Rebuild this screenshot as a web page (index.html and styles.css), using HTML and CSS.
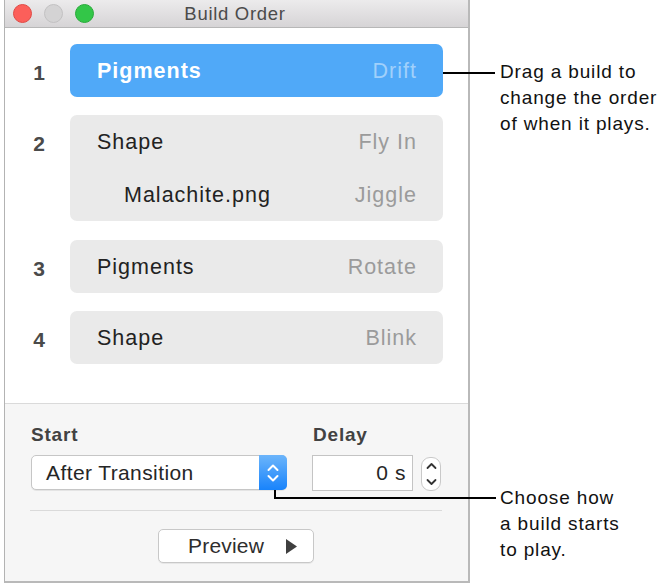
FILE: index.html
```html
<!DOCTYPE html>
<html>
<head>
<meta charset="utf-8">
<title>Build Order</title>
<link rel="stylesheet" href="styles.css">
</head>
<body>
<div class="page">
  <div class="window">
    <div class="titlebar">
      <div class="lights">
        <span class="light red"></span>
        <span class="light gray"></span>
        <span class="light green"></span>
      </div>
      <div class="title">Build Order</div>
      <div></div>
    </div>

    <div class="builds">
      <div class="build">
        <div class="num">1</div>
        <div class="card selected">
          <div class="line"><span class="name">Pigments</span><span class="effect">Drift</span></div>
        </div>
      </div>
      <div class="build double">
        <div class="num">2</div>
        <div class="card">
          <div class="line"><span class="name">Shape</span><span class="effect">Fly In</span></div>
          <div class="line sub"><span class="name">Malachite.png</span><span class="effect">Jiggle</span></div>
        </div>
      </div>
      <div class="build">
        <div class="num">3</div>
        <div class="card">
          <div class="line"><span class="name">Pigments</span><span class="effect">Rotate</span></div>
        </div>
      </div>
      <div class="build">
        <div class="num">4</div>
        <div class="card">
          <div class="line"><span class="name">Shape</span><span class="effect">Blink</span></div>
        </div>
      </div>
    </div>

    <div class="panel">
      <div class="fields">
        <div class="field start">
          <div class="label">Start</div>
          <div class="popup">
            <span class="popup-text">After Transition</span>
            <span class="popup-arrows">
              <svg width="12" height="22" viewBox="0 0 12 22"><path d="M1.5 8 L6 3.5 L10.5 8 M1.5 14 L6 18.5 L10.5 14" fill="none" stroke="#fff" stroke-width="2" stroke-linecap="round" stroke-linejoin="round"/></svg>
            </span>
          </div>
        </div>
        <div class="field delay">
          <div class="label delay-label">Delay</div>
          <div class="delay-row">
            <div class="numbox">0 s</div>
            <div class="stepper">
              <svg width="11" height="26" viewBox="0 0 11 26"><path d="M1.5 7 L5.5 3 L9.5 7 M1.5 19 L5.5 23 L9.5 19" fill="none" stroke="#333" stroke-width="1.8" stroke-linecap="round" stroke-linejoin="round"/></svg>
            </div>
          </div>
        </div>
      </div>
      <div class="sep"></div>
      <div class="actions">
        <button class="preview"><span>Preview</span>
          <svg class="play" width="11" height="15" viewBox="0 0 11 15"><polygon points="0,0 11,7.5 0,15" fill="#3f3f3f"/></svg>
        </button>
      </div>
    </div>
  </div>

  <div class="callouts">
    <p class="callout c1">Drag a build to<br>change the order<br>of when it plays.</p>
    <p class="callout c2">Choose how<br>a build starts<br>to play.</p>
  </div>
</div>
</body>
</html>
```

FILE: styles.css
```css
html, body {
  margin: 0;
  padding: 0;
  background: #fff;
}

body {
  font-family: "Liberation Sans", Arial, Helvetica, sans-serif;
  color: #222;
}

.page {
  display: flex;
  width: 666px;
  height: 584px;
  overflow: hidden;
}

/* ---------- window ---------- */
.window {
  margin-left: 4px;
  width: 466px;
  height: 583px;
  box-sizing: border-box;
  border-left: 1px solid #b3b3b3;
  border-right: 2px solid #b9b9b9;
  border-bottom: 2px solid #b9b9b9;
  display: flex;
  flex-direction: column;
  flex: none;
}

.titlebar {
  height: 27px;
  flex: none;
  border-bottom: 1px solid #b7b7b7;
  background: linear-gradient(#ecebec, #d6d4d6);
  display: grid;
  grid-template-columns: 1fr auto 1fr;
  align-items: center;
}

.lights {
  display: flex;
  gap: 12px;
  padding-left: 8px;
}

.light {
  width: 19px;
  height: 19px;
  box-sizing: border-box;
  border-radius: 50%;
  border: 1px solid;
}

.light.red {
  background: #fc5f5a;
  border-color: #e04a45;
}

.light.gray {
  background: #d4d3d4;
  border-color: #c2c1c2;
}

.light.green {
  background: #33c648;
  border-color: #29ab3a;
}

.title {
  font-size: 18.5px;
  letter-spacing: 0.7px;
  color: #4b4b4b;
  padding-right: 3px;
}

/* ---------- build list ---------- */
.builds {
  flex: 1;
  background: #fff;
  padding-top: 16px;
}

.build {
  display: grid;
  grid-template-columns: 65px 373px;
  margin-bottom: 18px;
}

.build.double {
  margin-bottom: 19px;
}

.num {
  height: 53px;
  line-height: 53px;
  padding: 2px 0 0 3px;
  box-sizing: border-box;
  text-align: center;
  font-size: 21px;
  font-weight: bold;
  color: #4a4a4a;
}

.card {
  background: #eaeaea;
  border-radius: 7px;
}

.card.selected {
  background: #50a9f8;
}

.line {
  height: 53px;
  box-sizing: border-box;
  display: flex;
  align-items: center;
  justify-content: space-between;
  padding: 2px 26px 0 27px;
  font-size: 21.5px;
  letter-spacing: 1px;
}

.line.sub .name {
  padding-left: 27px;
}

.name {
  color: #222;
}

.effect {
  color: #9b9b9b;
}

.selected .name {
  color: #fff;
  font-weight: bold;
}

.selected .effect {
  color: #a0d0fb;
}

/* ---------- bottom panel ---------- */
.panel {
  flex: none;
  height: 178px;
  box-sizing: border-box;
  border-top: 1px solid #dadada;
  background: #f6f6f6;
  padding: 20px 26px 0 25px;
}

.fields {
  display: flex;
  padding-left: 1px;
}

.field.start {
  width: 256px;
}

.field.delay {
  margin-left: 25px;
}

.label {
  font-size: 19px;
  line-height: 22px;
  font-weight: bold;
  letter-spacing: 0.8px;
  color: #424242;
  margin-bottom: 9px;
}

.delay-label {
  padding-left: 1px;
}

.popup {
  height: 35px;
  box-sizing: border-box;
  border: 1px solid #c6c6c6;
  border-radius: 5px;
  background: #fff;
  display: flex;
  align-items: center;
  box-shadow: 0 1px 0 rgba(0, 0, 0, 0.07);
}

.popup-text {
  flex: 1;
  padding-left: 14px;
  font-size: 21px;
  letter-spacing: 0.4px;
  color: #262626;
}

.popup-arrows {
  align-self: stretch;
  margin: -1px -1px -1px 0;
  width: 28px;
  border-radius: 0 5px 5px 0;
  background: linear-gradient(#6cb5fb, #1883fb);
  display: flex;
  align-items: center;
  justify-content: center;
}

.delay-row {
  display: flex;
  align-items: flex-start;
}

.numbox {
  width: 101px;
  height: 36px;
  box-sizing: border-box;
  border: 1px solid #c4c4c4;
  background: #fff;
  text-align: right;
  padding-right: 6px;
  font-size: 21px;
  line-height: 34px;
  letter-spacing: 0.6px;
  color: #262626;
}

.stepper {
  margin: 2px 0 0 8px;
  width: 20px;
  height: 34px;
  box-sizing: border-box;
  border: 1px solid #c9c9c9;
  border-radius: 9px;
  background: #fff;
  display: flex;
  align-items: center;
  justify-content: center;
}

.sep {
  margin-top: 19px;
  height: 1px;
  background: #dadada;
}

.actions {
  margin-top: 18px;
  display: flex;
  justify-content: center;
}

.preview {
  width: 156px;
  height: 34px;
  box-sizing: border-box;
  border: 1px solid #c8c8c8;
  border-radius: 5px;
  background: #fff;
  box-shadow: 0 1px 0 rgba(0, 0, 0, 0.06);
  display: flex;
  align-items: center;
  gap: 22px;
  padding: 0 18px 0 29px;
  font-family: "Liberation Sans", Arial, sans-serif;
  font-size: 21px;
  letter-spacing: 0.2px;
  color: #2e2e2e;
}

.play {
  flex: none;
  display: block;
}

/* ---------- callouts ---------- */
.callouts {
  margin-left: 30px;
  flex: none;
}

.callout {
  position: relative;
  margin: 0;
  font-size: 19px;
  line-height: 26px;
  letter-spacing: 0.85px;
  color: #111;
  white-space: nowrap;
}

.c1 {
  margin-top: 59px;
}

.c1::before {
  content: "";
  position: absolute;
  left: -57px;
  top: 13px;
  width: 52px;
  height: 2px;
  background: #000;
}

.c2 {
  margin-top: 348px;
}

.c2::before {
  content: "";
  position: absolute;
  left: -226px;
  top: 12px;
  width: 222px;
  height: 2px;
  background: #000;
}

.c2::after {
  content: "";
  position: absolute;
  left: -226px;
  top: 5px;
  width: 2px;
  height: 9px;
  background: #000;
}
```
